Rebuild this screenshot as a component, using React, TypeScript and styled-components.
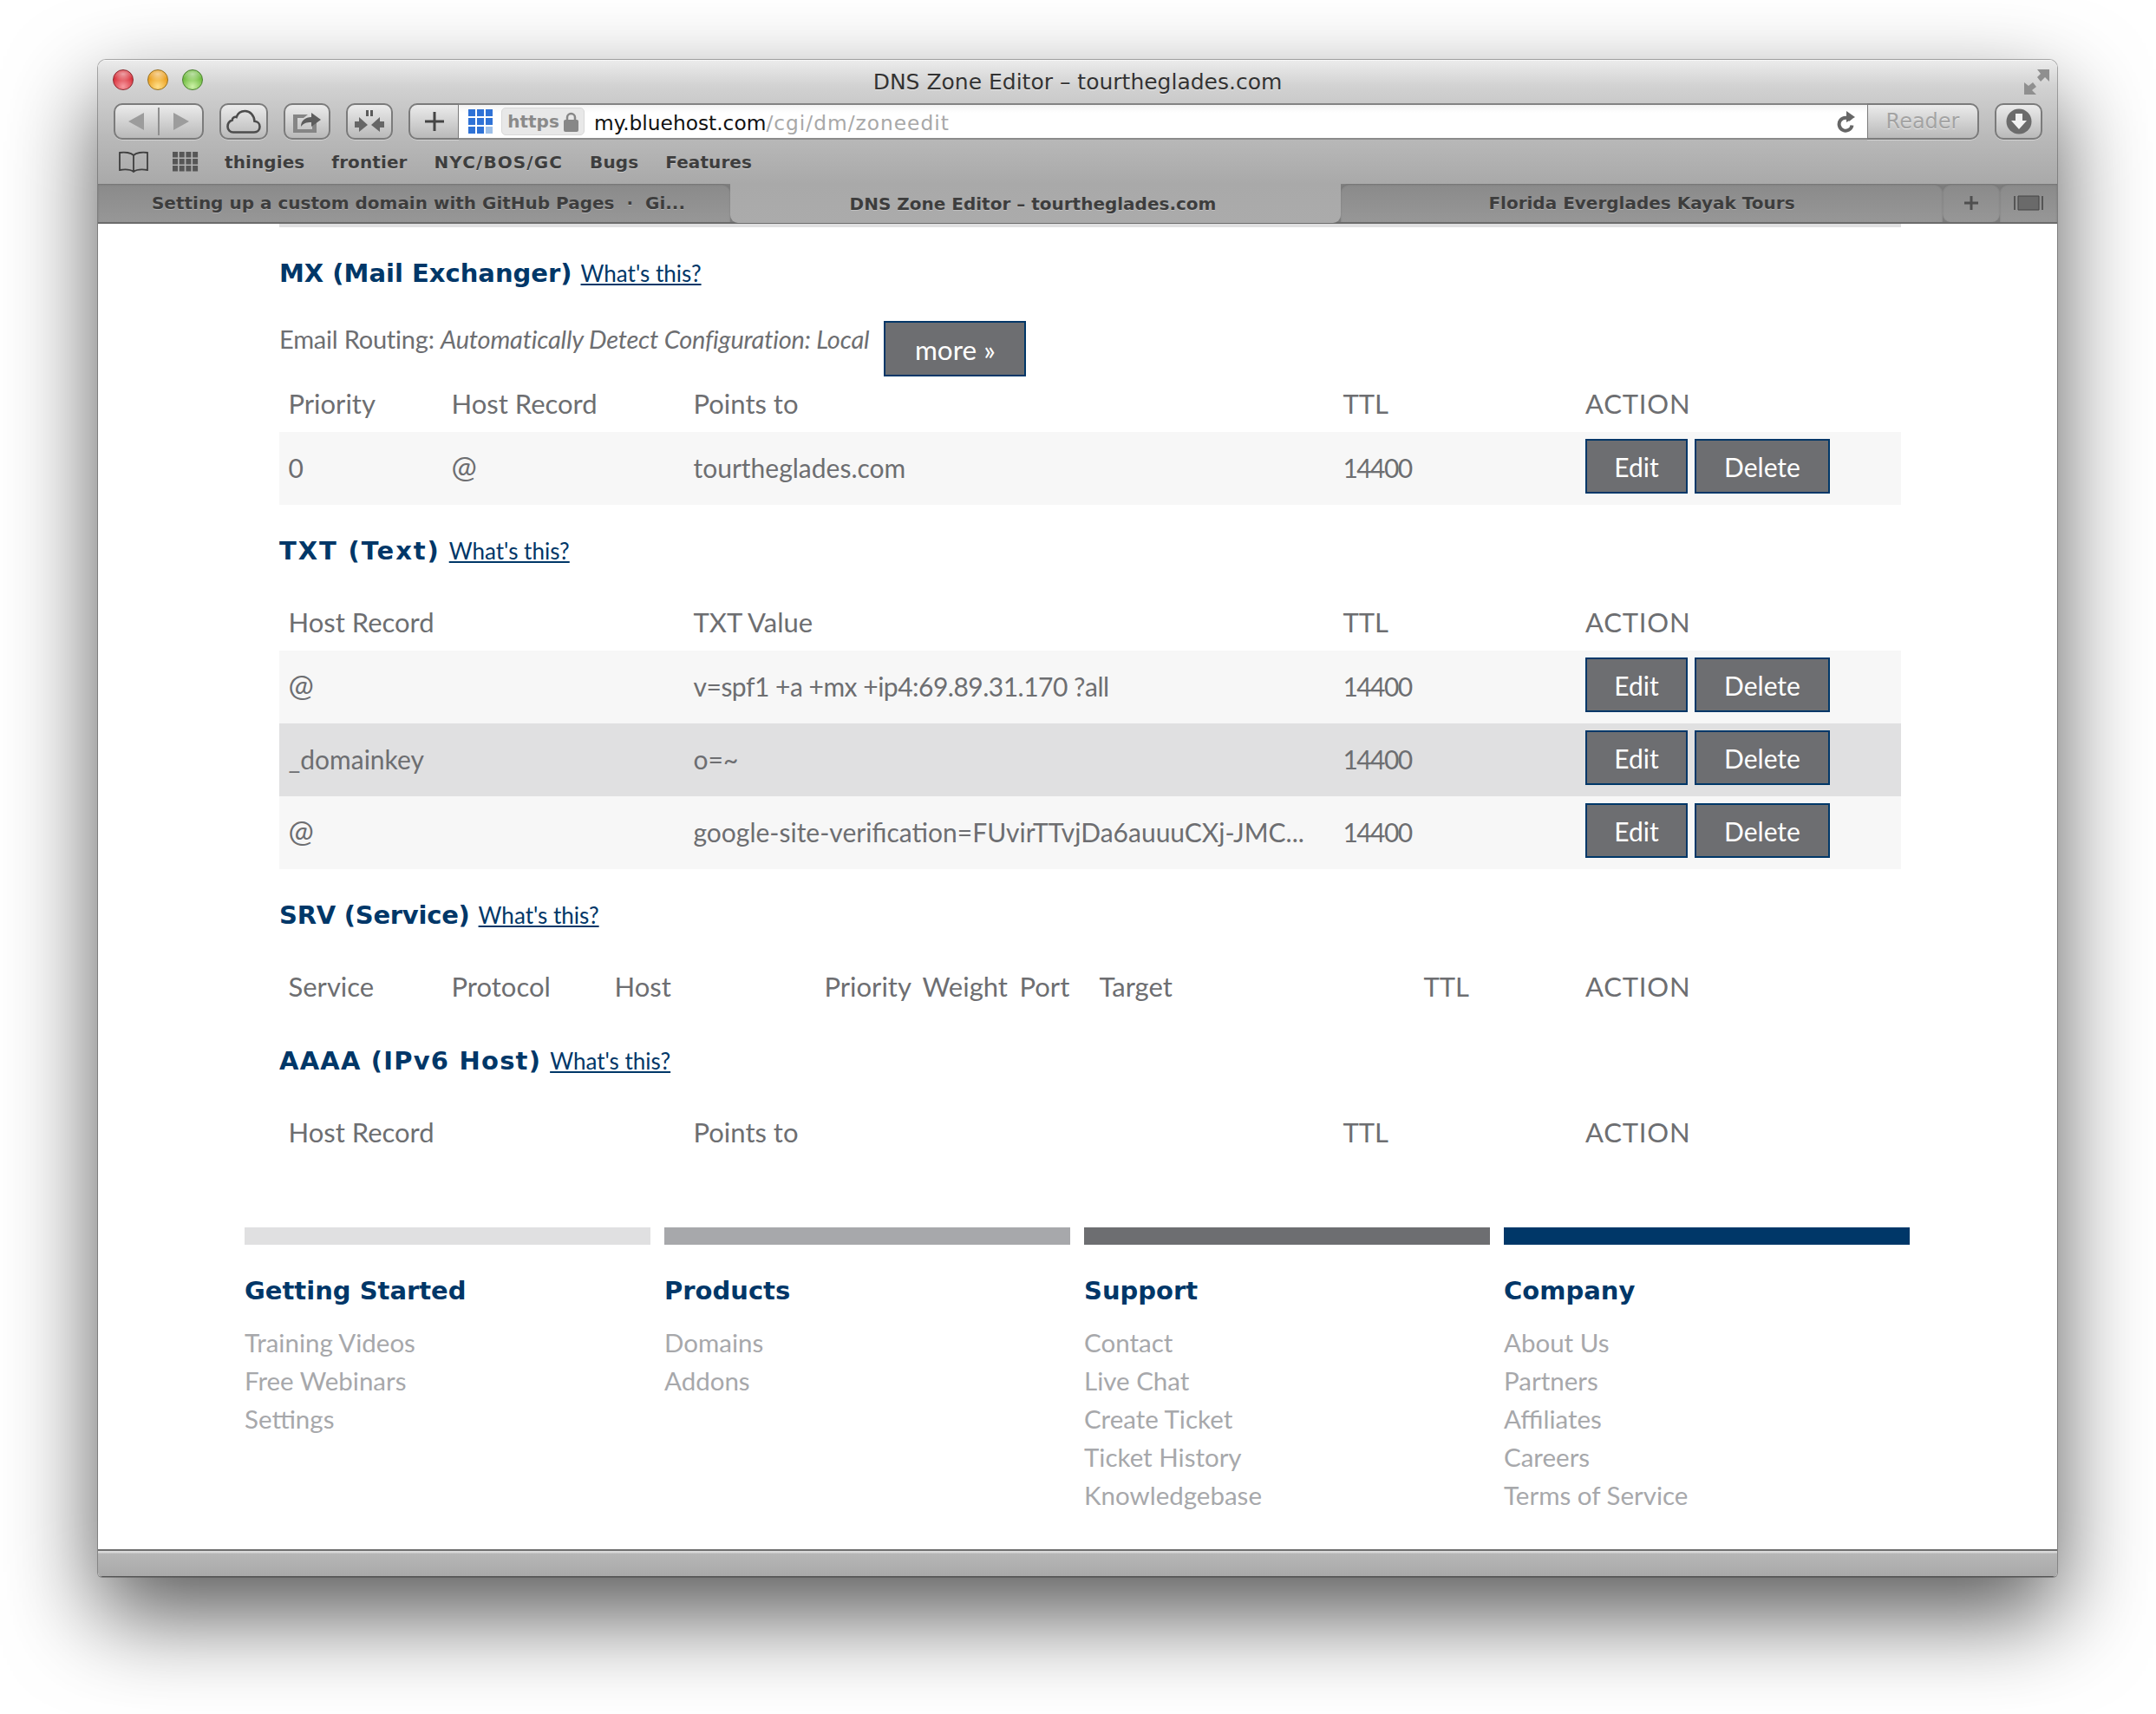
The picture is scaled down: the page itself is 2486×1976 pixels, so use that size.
import styled, { createGlobalStyle } from 'styled-components';

const NAVY = '#003768';
const GREY = '#6d6e71';
const CHROME_FONT = '"DejaVu Sans", "Liberation Sans", sans-serif';
const PAGE_FONT = 'Lato, "Liberation Sans", sans-serif';

const GlobalStyle = createGlobalStyle`
    html, body {
        margin: 0;
        background: #fff;
    }
    body {
        font-family: ${PAGE_FONT};
    }
`;

const Page = styled.div`
    width: 2486px;
    height: 1976px;
    padding: 69px 0 0 113px;
    box-sizing: border-box;
    overflow: hidden;
`;

const Window = styled.div`
    width: 2259px;
    height: 1749px;
    display: flex;
    flex-direction: column;
    border-radius: 9px 9px 5px 5px;
    overflow: hidden;
    background: #fff;
    box-shadow: 0 0 0 1px rgba(60, 60, 60, 0.4), 0 44px 105px rgba(0, 0, 0, 0.66);
`;

const Chrome = styled.div`
    height: 143px;
    background: linear-gradient(#ececec 0, #d2d2d2 30px, #b8b8b8 92px, #a9a9a9 143px);
    box-shadow: inset 0 1px 0 rgba(255, 255, 255, 0.6);
`;

const TitleBar = styled.div`
    height: 50px;
    display: grid;
    grid-template-columns: 1fr auto 1fr;
    align-items: center;
    padding: 0 17px;
    box-sizing: border-box;
`;

const Lights = styled.div`
    display: flex;
    gap: 16px;
    margin-top: -4px;
`;

const Light = styled.span<{ $c1: string; $c2: string; $edge: string }>`
    width: 24px;
    height: 24px;
    border-radius: 50%;
    box-sizing: border-box;
    border: 1px solid ${p => p.$edge};
    background:
        radial-gradient(ellipse 60% 35% at 50% 20%, rgba(255, 255, 255, 0.55), transparent 100%),
        radial-gradient(circle at 50% 85%, ${p => p.$c2}, ${p => p.$c1} 62%);
`;

const Title = styled.div`
    font-family: ${CHROME_FONT};
    font-size: 25px;
    color: #333;
    text-shadow: 0 1px 0 rgba(255, 255, 255, 0.5);
`;

const ExpandSlot = styled.div`
    display: flex;
    justify-content: flex-end;
    margin: 0 -8px 0 0;
`;

const Toolbar = styled.div`
    height: 42px;
    display: flex;
    padding: 0 17px 0 18px;
    gap: 18px;
`;

const ToolButton = styled.div<{ $w: number }>`
    width: ${p => p.$w}px;
    height: 42px;
    box-sizing: border-box;
    flex: none;
    display: flex;
    align-items: center;
    justify-content: center;
    border: 2px solid #7b7b7b;
    border-radius: 10px;
    background: linear-gradient(#ebebeb, #b9b9b9);
    box-shadow: 0 1px 0 rgba(255, 255, 255, 0.35);
`;

const NavDivider = styled.span`
    width: 2px;
    height: 32px;
    margin: 0 16px;
    background: #8f8f8f;
`;

const AddressGroup = styled.div`
    display: flex;
    flex: 1;
    height: 42px;
`;

const PlusButton = styled(ToolButton)`
    border-right-width: 1px;
    border-radius: 10px 0 0 10px;
`;

const AddressField = styled.div`
    flex: 1;
    display: flex;
    align-items: center;
    box-sizing: border-box;
    padding: 0 13px 0 11px;
    background: linear-gradient(#f4f4f4, #fff 9px);
    border-top: 2px solid #838383;
    border-bottom: 2px solid #8b8b8b;
`;

const HttpsPill = styled.div`
    width: 96px;
    height: 32px;
    flex: none;
    display: flex;
    align-items: center;
    justify-content: center;
    gap: 5px;
    margin: 0 11px 0 10px;
    box-sizing: border-box;
    border: 1px solid #d8d8d8;
    border-radius: 5px;
    background: #e8e8e8;
    font-family: ${CHROME_FONT};
    font-weight: 700;
    font-size: 20px;
    color: #8a8a8a;
`;

const Url = styled.div`
    flex: 1;
    font-family: ${CHROME_FONT};
    font-size: 23.3px;
    color: #111;
    white-space: nowrap;
    padding-top: 2px;
`;

const UrlPath = styled.span`
    color: #a8a8a8;
    letter-spacing: 1px;
`;

const ReaderButton = styled(ToolButton)`
    border-left-width: 1px;
    border-radius: 0 10px 10px 0;
    font-family: ${CHROME_FONT};
    font-size: 24px;
    color: #a3a3a3;
    text-shadow: 0 1px 0 rgba(255, 255, 255, 0.6);
`;

const BookmarkBar = styled.div`
    height: 51px;
    display: flex;
    align-items: center;
    padding: 0 0 0 23px;
`;

const BookmarkIcons = styled.div`
    display: flex;
    align-items: center;
    gap: 27px;
    margin-right: 30px;
`;

const Bookmark = styled.span<{ $track?: number }>`
    font-family: ${CHROME_FONT};
    font-weight: 700;
    font-size: 20px;
    color: #3e3e3e;
    letter-spacing: ${p => p.$track ?? 0.1}px;
    margin-right: 31px;
    padding-top: 1px;
    text-shadow: 0 1px 0 rgba(255, 255, 255, 0.35);
`;

const TabBar = styled.div`
    height: 46px;
    display: flex;
    background: #7d7d7d;
    box-shadow: inset 0 -2px 0 #6b6b6b, inset 0 1px 0 #808080;
`;

const Tab = styled.div<{ $w: number; $active?: boolean; $corner?: string; $shift?: number }>`
    width: ${p => p.$w}px;
    height: ${p => (p.$active ? '45px' : '44px')};
    flex: none;
    display: flex;
    align-items: center;
    justify-content: center;
    box-sizing: border-box;
    padding-left: ${p => p.$shift ?? 0}px;
    padding-right: ${p => (p.$active ? 6 : 0)}px;
    background: ${p => (p.$active ? 'linear-gradient(#a9a9a9, #ababab)' : 'linear-gradient(#8a8a8a, #979797)')};
    border-radius: ${p => (p.$active ? '0 0 9px 9px' : p.$corner || '0')};
    box-shadow: ${p => (p.$active ? 'none' : 'inset 0 1px 2px rgba(0, 0, 0, 0.18)')};
    font-family: ${CHROME_FONT};
    font-weight: 700;
    font-size: 20px;
    color: #3d3d3d;
    text-shadow: 0 1px 0 rgba(255, 255, 255, 0.3);
    white-space: nowrap;
`;

const Content = styled.div`
    flex: 1;
    background: #fff;
    min-height: 0;
`;

const Main = styled.div`
    width: 1870px;
    margin-left: 209px;
    color: ${GREY};
    font-size: 31px;
`;

const TopStrip = styled.div`
    height: 4px;
    background: #e0e0e1;
`;

const SectionHead = styled.div`
    height: 50px;
    margin-top: 28px;
    display: flex;
    align-items: center;
    gap: 10px;
`;

const SectionTitle = styled.h2<{ $track: number }>`
    margin: 0;
    font-family: ${CHROME_FONT};
    font-weight: 700;
    font-size: 29px;
    letter-spacing: ${p => p.$track}px;
    color: ${NAVY};
`;

const HelpLink = styled.a`
    font-size: 26px;
    color: ${NAVY};
    text-decoration: underline;
`;

const RoutingLine = styled.div`
    margin-top: 30px;
    display: flex;
    height: 64px;
    line-height: 42px;
`;

const RoutingText = styled.span`
    margin-right: 17px;
    font-size: 29px;
    letter-spacing: -0.2px;
    white-space: pre;
`;

const SolidButton = styled.button<{ $w: number; $h: number }>`
    width: ${p => p.$w}px;
    height: ${p => p.$h}px;
    flex: none;
    padding: 0;
    border: 2px solid ${NAVY};
    background: ${GREY};
    color: #fff;
    font-family: ${PAGE_FONT};
    font-size: 30px;
`;

const MoreButton = styled(SolidButton)`
    padding-top: 2px;
    font-size: 31.5px;
`;

const Row = styled.div<{ $cols: string; $tone?: string; $head?: boolean }>`
    display: grid;
    grid-template-columns: ${p => p.$cols};
    align-items: center;
    height: ${p => (p.$head ? '64px' : '84px')};
    background: ${p => p.$tone || 'transparent'};
    margin-top: ${p => (p.$head ? '26px' : '0')};
`;

const HeadFirst = styled(Row)`
    margin-top: 0;
`;

const Cell = styled.div`
    padding: 0 0 2px 10.5px;
    white-space: nowrap;
`;

const DataCell = styled(Cell)`
    font-size: 30px;
    padding-bottom: 3px;
`;

const ActionHead = styled(Cell)`
    padding-left: 11px;
    letter-spacing: 0.8px;
`;

const NumberCell = styled(DataCell)`
    letter-spacing: -1.6px;
`;

const SpfValue = styled.span`
    letter-spacing: -0.5px;
`;

const AtSign = styled.span`
    font-size: 35px;
    line-height: 30px;
`;

const Actions = styled.div`
    display: flex;
    gap: 8px;
    padding-left: 11px;
    margin-bottom: 5px;
`;

const Footer = styled.div`
    width: 1920px;
    margin: 77px 0 0 169px;
    display: grid;
    grid-template-columns: repeat(4, 468px);
    gap: 16px;
`;

const FooterBar = styled.div<{ $c: string }>`
    height: 20px;
    background: ${p => p.$c};
`;

const FooterTitle = styled.h3`
    margin: 28px 0 13px;
    height: 50px;
    line-height: 50px;
    font-family: ${CHROME_FONT};
    font-weight: 700;
    font-size: 29px;
    color: ${NAVY};
`;

const FooterLink = styled.div`
    height: 44px;
    line-height: 44px;
    font-size: 29.5px;
    color: #a7a8ab;
`;

const StatusBar = styled.div`
    height: 32px;
    box-sizing: border-box;
    border-top: 2px solid #6f6f6f;
    border-bottom: 1px solid #555;
    background: linear-gradient(#d9d9d9 0, #d9d9d9 2px, #b6b6b6 3px, #a9a9a9 100%);
`;

const Triangle = ({ flip }: { flip?: boolean }) => (
    <svg width="18" height="20" viewBox="0 0 18 20">
        <path d={flip ? 'M0 0 18 10 0 20Z' : 'M18 0 0 10 18 20Z'} fill="#9c9c9c" />
    </svg>
);

const CloudIcon = () => (
    <svg width="40" height="28" viewBox="0 0 40 28">
        <path
            d="M8 26.5h24c4 0 6.5-3 6.5-6.5 0-3.6-2.6-6-6-6.2C32 7 27.5 2 21.5 2 16.5 2 13 5 11.6 9c-1.8-.6-4.8.2-4.8 3.6C3.6 13.600 1.500 16.500 1.500 20c0 3.500 2.800 6.500 6.500 6.500Z"
            fill="none"
            stroke="#4c4c4c"
            strokeWidth="2.6"
        />
    </svg>
);

const ShareIcon = () => (
    <svg width="34" height="28" viewBox="0 0 34 28">
        <path d="M1 6h17l-5 4H6v13h17v-7l5-3v14H1Z" fill="#858585" />
        <path d="M10 20c0-7 5-11 12-11V4l11 8-11 8v-5c-6 0-9 1-12 5Z" fill="#5d5d5d" />
    </svg>
);

const MergeIcon = () => (
    <svg width="34" height="26" viewBox="0 0 34 26">
        <path d="M13 0h3v7h-3ZM18 0h3v7h-3Z" fill="#5a5a5a" />
        <path d="M0 13h5V8l10 9-10 8v-5H0ZM34 13h-5V8l-10 9 10 8v-5h5Z" fill="#666" />
    </svg>
);

const PlusIcon = () => (
    <svg width="22" height="22" viewBox="0 0 22 22">
        <path d="M9.500 0h3v9.500H22v3h-9.500V22h-3v-9.500H0v-3h9.500Z" fill="#444" />
    </svg>
);

const SiteGrid = () => (
    <svg width="28" height="28" viewBox="0 0 28 28" style={{ flex: 'none' }}>
        {[0, 1, 2].flatMap(r =>
            [0, 1, 2].map(c => (
                <rect
                    key={`${r}-${c}`}
                    x={c * 10}
                    y={r * 10}
                    width="8"
                    height="8"
                    fill={r === 2 && c === 2 ? '#9dbfe8' : '#2f72d6'}
                />
            ))
        )}
    </svg>
);

const LockIcon = () => (
    <svg width="17" height="23" viewBox="0 0 17 23">
        <path d="M4 10V6.500a4.500 4.500 0 0 1 9 0V10" fill="none" stroke="#878787" strokeWidth="2.500" />
        <rect x="0" y="9" width="17" height="14" rx="2" fill="#878787" />
    </svg>
);

const ReloadIcon = () => (
    <svg width="22" height="25" viewBox="0 0 22 25" style={{ flex: 'none' }}>
        <path d="M16 10.500a7.500 7.500 0 1 0 1.500 6" fill="none" stroke="#666" strokeWidth="4" />
        <path d="M11 0l10 7-10 6Z" fill="#666" />
    </svg>
);

const DownloadIcon = () => (
    <svg width="30" height="30" viewBox="0 0 30 30">
        <circle cx="15" cy="15" r="14.500" fill="#6b6b6b" />
        <path d="M11 6h8v8h5L15 24 6 14h5Z" fill="#f1f1f1" />
    </svg>
);

const ExpandIcon = () => (
    <svg width="29" height="29" viewBox="0 0 29 29">
        <path d="M15 0h14v14l-5-5-5 5-4-5 4-4ZM0 15l5 4 5-4 4 5-5 4 5 5H0Z" fill="#8f8f8f" />
    </svg>
);

const BookIcon = () => (
    <svg width="36" height="26" viewBox="0 0 36 26">
        <path
            d="M18 5C15 2 8 1 2 2v20c6-1 12-1 16 2 4-3 10-3 16-2V2C28 1 21 2 18 5Zm0 0v19"
            fill="none"
            stroke="#3f3f3f"
            strokeWidth="1.800"
        />
    </svg>
);

const BookmarksGrid = () => (
    <svg width="30" height="23" viewBox="0 0 30 23">
        {[0, 1, 2].flatMap(r =>
            [0, 1, 2, 3].map(c => (
                <rect key={`${r}-${c}`} x={c * 7.700} y={r * 8} width="6" height="6.500" fill="#565656" />
            ))
        )}
    </svg>
);

const TabPlus = () => (
    <svg width="16" height="16" viewBox="0 0 16 16">
        <path d="M6.500 0h3v6.500H16v3H9.500V16h-3V9.500H0v-3h6.500Z" fill="#4f4f4f" />
    </svg>
);

const TabOverview = () => (
    <svg width="34" height="18" viewBox="0 0 34 18">
        <path d="M0 1h2v16H0ZM32 1h2v16h-2Z" fill="#555" />
        <path d="M5 1h24v16H5Z" fill="#6a6a6a" stroke="#444" strokeWidth="1" />
    </svg>
);

const MX_COLS = '188px 279px 749px 279px 375px';
const TXT_COLS = '467px 749px 279px 375px';
const SRV_COLS = '188px 188px 242px 113px 112px 92px 374px 186px 375px';

const RowActions = () => (
    <Actions>
        <SolidButton $w={118} $h={63}>Edit</SolidButton>
        <SolidButton $w={156} $h={63}>Delete</SolidButton>
    </Actions>
);

const Section = ({ title, track = 0 }: { title: string; track?: number }) => (
    <SectionHead>
        <SectionTitle $track={track}>{title}</SectionTitle>
        <HelpLink href="#">What's this?</HelpLink>
    </SectionHead>
);

const txtRows = [
    { host: <AtSign>@</AtSign>, value: <SpfValue>v=spf1 +a +mx +ip4:69.89.31.170 ?all</SpfValue>, tone: '#f7f7f7' },
    { host: '_domainkey', value: 'o=~', tone: '#e0e0e1' },
    { host: <AtSign>@</AtSign>, value: 'google-site-verification=FUvirTTvjDa6auuuCXj-JMC...', tone: '#f7f7f7' },
];

const footerColumns = [
    { title: 'Getting Started', color: '#e0e0e1', links: ['Training Videos', 'Free Webinars', 'Settings'] },
    { title: 'Products', color: '#a7a8ab', links: ['Domains', 'Addons'] },
    { title: 'Support', color: GREY, links: ['Contact', 'Live Chat', 'Create Ticket', 'Ticket History', 'Knowledgebase'] },
    { title: 'Company', color: NAVY, links: ['About Us', 'Partners', 'Affiliates', 'Careers', 'Terms of Service'] },
];

const App = () => {
    return (
        <Page>
            <GlobalStyle />
            <Window>
                <Chrome>
                    <TitleBar>
                        <Lights>
                            <Light $c1="#d8323c" $c2="#f79aa0" $edge="#8c2a30" />
                            <Light $c1="#eb9f1f" $c2="#ffe08a" $edge="#96701f" />
                            <Light $c1="#6fbb3f" $c2="#cdf2a8" $edge="#4a8030" />
                        </Lights>
                        <Title>DNS Zone Editor – tourtheglades.com</Title>
                        <ExpandSlot><ExpandIcon /></ExpandSlot>
                    </TitleBar>
                    <Toolbar>
                        <ToolButton $w={104}>
                            <Triangle />
                            <NavDivider />
                            <Triangle flip />
                        </ToolButton>
                        <ToolButton $w={56}><CloudIcon /></ToolButton>
                        <ToolButton $w={54}><ShareIcon /></ToolButton>
                        <ToolButton $w={54}><MergeIcon /></ToolButton>
                        <AddressGroup>
                            <PlusButton $w={58}><PlusIcon /></PlusButton>
                            <AddressField>
                                <SiteGrid />
                                <HttpsPill>https<LockIcon /></HttpsPill>
                                <Url>my.bluehost.com<UrlPath>/cgi/dm/zoneedit</UrlPath></Url>
                                <ReloadIcon />
                            </AddressField>
                            <ReaderButton $w={129}>Reader</ReaderButton>
                        </AddressGroup>
                        <ToolButton $w={55}><DownloadIcon /></ToolButton>
                    </Toolbar>
                    <BookmarkBar>
                        <BookmarkIcons>
                            <BookIcon />
                            <BookmarksGrid />
                        </BookmarkIcons>
                        <Bookmark>thingies</Bookmark>
                        <Bookmark>frontier</Bookmark>
                        <Bookmark $track={1.1}>NYC/BOS/GC</Bookmark>
                        <Bookmark>Bugs</Bookmark>
                        <Bookmark>Features</Bookmark>
                    </BookmarkBar>
                </Chrome>
                <TabBar>
                    <Tab $w={729} $corner="0 9px 0 0" $shift={10}>Setting up a custom domain with GitHub Pages {'\u00a0·\u00a0'} Gi...</Tab>
                    <Tab $w={704} $active>DNS Zone Editor – tourtheglades.com</Tab>
                    <Tab $w={694} $corner="9px 9px 0 0">Florida Everglades Kayak Tours</Tab>
                    <Tab $w={66} $corner="9px 9px 9px 9px"><TabPlus /></Tab>
                    <Tab $w={66} $corner="9px 0 0 0"><TabOverview /></Tab>
                </TabBar>
                <Content>
                    <Main>
                        <TopStrip />
                        <Section title="MX (Mail Exchanger)" />
                        <RoutingLine>
                            <RoutingText>Email Routing: <em>Automatically Detect Configuration: Local</em></RoutingText>
                            <MoreButton $w={164} $h={64}>more »</MoreButton>
                        </RoutingLine>
                        <HeadFirst $cols={MX_COLS} $head>
                            <Cell>Priority</Cell>
                            <Cell>Host Record</Cell>
                            <Cell>Points to</Cell>
                            <Cell>TTL</Cell>
                            <ActionHead>ACTION</ActionHead>
                        </HeadFirst>
                        <Row $cols={MX_COLS} $tone="#f7f7f7">
                            <DataCell>0</DataCell>
                            <DataCell><AtSign>@</AtSign></DataCell>
                            <DataCell>tourtheglades.com</DataCell>
                            <NumberCell>14400</NumberCell>
                            <RowActions />
                        </Row>

                        <Section title="TXT (Text)" track={1.9} />
                        <Row $cols={TXT_COLS} $head>
                            <Cell>Host Record</Cell>
                            <Cell>TXT Value</Cell>
                            <Cell>TTL</Cell>
                            <ActionHead>ACTION</ActionHead>
                        </Row>
                        {txtRows.map((row, i) => (
                            <Row key={i} $cols={TXT_COLS} $tone={row.tone}>
                                <DataCell>{row.host}</DataCell>
                                <DataCell>{row.value}</DataCell>
                                <NumberCell>14400</NumberCell>
                                <RowActions />
                            </Row>
                        ))}

                        <Section title="SRV (Service)" track={-0.25} />
                        <Row $cols={SRV_COLS} $head>
                            <Cell>Service</Cell>
                            <Cell>Protocol</Cell>
                            <Cell>Host</Cell>
                            <Cell>Priority</Cell>
                            <Cell>Weight</Cell>
                            <Cell>Port</Cell>
                            <Cell>Target</Cell>
                            <Cell>TTL</Cell>
                            <ActionHead>ACTION</ActionHead>
                        </Row>

                        <Section title="AAAA (IPv6 Host)" track={1.2} />
                        <Row $cols={TXT_COLS} $head>
                            <Cell>Host Record</Cell>
                            <Cell>Points to</Cell>
                            <Cell>TTL</Cell>
                            <ActionHead>ACTION</ActionHead>
                        </Row>
                    </Main>
                    <Footer>
                        {footerColumns.map(col => (
                            <div key={col.title}>
                                <FooterBar $c={col.color} />
                                <FooterTitle>{col.title}</FooterTitle>
                                {col.links.map(link => (
                                    <FooterLink key={link}>{link}</FooterLink>
                                ))}
                            </div>
                        ))}
                    </Footer>
                </Content>
                <StatusBar />
            </Window>
        </Page>
    );
};

export default App;
